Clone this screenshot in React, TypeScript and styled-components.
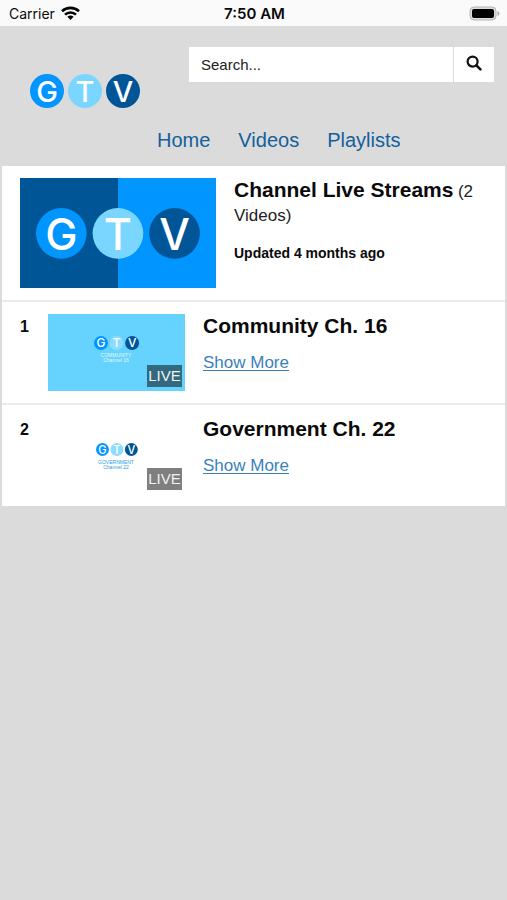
import React from "react";
import styled, { createGlobalStyle } from "styled-components";

const GlobalStyle = createGlobalStyle`
  * { box-sizing: border-box; }
  body {
    margin: 0;
    background: #dbdbdb;
    color: #0a0a0a;
    font-family: "Liberation Sans", Arial, sans-serif;
    font-size: 16px;
  }
`;

const StatusBar = styled.div`
  display: grid;
  grid-template-columns: 1fr auto 1fr;
  align-items: center;
  height: 26px;
  padding: 0 7px 0 9px;
  background: #fafafa;
  font-family: Inter, sans-serif;
  font-size: 14px;
`;

const Carrier = styled.div`
  display: flex;
  align-items: center;
  gap: 6px;
`;

const Clock = styled.time`
  font-size: 15px;
  font-weight: 600;
`;

const Battery = styled.svg`
  justify-self: end;
`;

const Header = styled.header`
  display: grid;
  grid-template-columns: 189px 1fr;
  padding: 21px 13px 0 0;
`;

const Brand = styled.a`
  padding: 27px 0 0 30px;
  svg { display: block; }
`;

const SearchForm = styled.form`
  display: flex;
  gap: 1px;
  height: 35px;
`;

const SearchInput = styled.input`
  flex: 1;
  min-width: 0;
  padding: 0 12px;
  border: 0;
  border-radius: 0;
  background: #fff;
  color: #222;
  font-family: inherit;
  font-size: 15px;
  &::placeholder { color: #222; opacity: 1; }
`;

const SearchButton = styled.button`
  display: flex;
  align-items: center;
  justify-content: center;
  width: 40px;
  padding: 0 0 3px;
  border: 0;
  background: #fff;
  color: #111;
`;

const Nav = styled.nav`
  grid-column: 1 / -1;
  display: flex;
  gap: 28px;
  padding: 19px 0 14px 157px;
`;

const NavLink = styled.a`
  color: #13609b;
  font-size: 20px;
  line-height: 24px;
  text-decoration: none;
`;

const List = styled.main`
  margin: 0 2px;
`;

const Summary = styled.section`
  display: flex;
  gap: 18px;
  padding: 12px 18px;
  border-bottom: 2px solid #ebebeb;
  background: #fff;
`;

const Cover = styled.svg`
  flex: none;
  display: block;
`;

const Details = styled.div`
  flex: 1;
  min-width: 0;
  line-height: 24px;
`;

const Title = styled.h2`
  display: inline;
  margin: 0;
  color: #0a0a0a;
  font-size: 21px;
  font-weight: 700;
  line-height: 24px;
`;

const Count = styled.span`
  color: #222;
  font-size: 17px;
  line-height: 24px;
`;

const Updated = styled.p`
  margin: 15px 0 0;
  font-size: 14px;
  font-weight: 700;
  line-height: 20px;
`;

const Channels = styled.ol`
  margin: 0;
  padding: 0;
  list-style: none;
`;

const Channel = styled.li`
  display: flex;
  padding: 12px 18px;
  border-bottom: 2px solid #ebebeb;
  background: #fff;
  &:last-child { border-bottom: 0; }
`;

const Position = styled.span`
  width: 28px;
  font-size: 16px;
  font-weight: 700;
  line-height: 26px;
`;

const Thumb = styled.div<{ $color: string }>`
  position: relative;
  flex: none;
  height: 77px;
  margin-right: 18px;
  background: ${(p) => p.$color};
  svg { display: block; }
`;

const LiveBadge = styled.span`
  position: absolute;
  right: 3px;
  bottom: 4px;
  width: 35px;
  background: rgba(0, 0, 0, 0.5);
  color: #f2f2f2;
  font-size: 15px;
  line-height: 22px;
  text-align: center;
`;

const ShowMore = styled.a`
  display: block;
  width: fit-content;
  margin-top: 12px;
  color: #3b7fbd;
  font-size: 17px;
  line-height: 22px;
  text-underline-offset: 2px;
`;

const LogoLetter = styled.text`
  fill: #fff;
  font-family: Inter, sans-serif;
  font-size: 29px;
  font-weight: 500;
  text-anchor: middle;
`;

const Caption = styled.text`
  font-family: "Liberation Sans", sans-serif;
  font-size: 5px;
  text-anchor: middle;
`;

const BLUE = "#0095ff";
const SKY = "#7bd6ff";
const NAVY = "#005596";

function LogoMark({ middle = SKY }: { middle?: string }) {
  return (
    <g>
      <circle cx="17" cy="17" r="17" fill={BLUE} />
      <circle cx="55" cy="17" r="17" fill={middle} />
      <circle cx="93" cy="17" r="17" fill={NAVY} />
      <LogoLetter x="17" y="28">G</LogoLetter>
      <LogoLetter x="55" y="28">T</LogoLetter>
      <LogoLetter x="93" y="28">V</LogoLetter>
    </g>
  );
}

interface ChannelData {
  title: string;
  name: string;
  caption: string;
  color: string;
  ink: string;
  middle: string;
  x: number;
  y: number;
  scale: number;
}

const channels: ChannelData[] = [
  { title: "Community Ch. 16", name: "COMMUNITY", caption: "Channel 16", color: "#66d3ff", ink: "#e5f8ff", middle: "#8bddff", x: 46, y: 22, scale: 0.41 },
  { title: "Government Ch. 22", name: "GOVERNMENT", caption: "Channel 22", color: "#ffffff", ink: "#2a9be0", middle: "#8edcff", x: 48, y: 26, scale: 0.38 },
];

export default function App() {
  return (
    <>
      <GlobalStyle />
      <StatusBar>
        <Carrier>
          <span>Carrier</span>
          <svg width="19" height="15" viewBox="0 0 19 15" fill="none" stroke="#050505" strokeWidth="2.6" aria-hidden="true">
            <path d="M1 5.2C5.8.7 13.2.7 18 5.2" />
            <path d="M4 8.6c3.1-2.9 7.9-2.9 11 0" />
            <path d="M9.5 14 6.4 10.8c1.8-1.6 4.4-1.6 6.2 0Z" fill="#050505" stroke="none" />
          </svg>
        </Carrier>
        <Clock>7:50 AM</Clock>
        <Battery width="31" height="15" viewBox="0 0 31 15" aria-label="Battery full">
          <rect x="1" y="1" width="26" height="13" rx="4" fill="#ddd" stroke="#b5b5b5" />
          <rect x="3" y="3" width="22" height="9" rx="2" fill="#000" />
          <path d="M28.5 5c2.5 1 2.5 4 0 5Z" fill="#aaa" />
        </Battery>
      </StatusBar>
      <Header>
        <Brand href="#home" aria-label="GTV home">
          <svg width="110" height="35" viewBox="0 0 110 35" overflow="visible" aria-hidden="true">
            <LogoMark />
          </svg>
        </Brand>
        <SearchForm role="search" onSubmit={(e: React.FormEvent) => e.preventDefault()}>
          <SearchInput type="text" aria-label="Search" placeholder="Search..." />
          <SearchButton type="submit" aria-label="Submit search">
            <svg width="16" height="16" viewBox="0 0 16 16" fill="none" stroke="currentColor" aria-hidden="true">
              <circle cx="6.6" cy="6.6" r="5" strokeWidth="2.2" />
              <path d="m10.4 10.4 4 4" strokeWidth="2.6" strokeLinecap="round" />
            </svg>
          </SearchButton>
        </SearchForm>
        <Nav aria-label="Main">
          <NavLink href="#home">Home</NavLink>
          <NavLink href="#videos">Videos</NavLink>
          <NavLink href="#playlists">Playlists</NavLink>
        </Nav>
      </Header>
      <List>
        <Summary>
          <Cover width="196" height="110" viewBox="0 0 196 110" aria-label="GTV">
            <rect width="196" height="110" fill={BLUE} />
            <rect width="98" height="110" fill={NAVY} />
            <g transform="translate(16 30) scale(1.49)">
              <LogoMark />
            </g>
          </Cover>
          <Details>
            <Title>Channel Live Streams</Title> <Count>(2 Videos)</Count>
            <Updated>Updated 4 months ago</Updated>
          </Details>
        </Summary>
        <Channels>
          {channels.map((c, i) => (
            <Channel key={c.title}>
              <Position>{i + 1}</Position>
              <Thumb $color={c.color}>
                <svg width="137" height="77" viewBox="0 0 137 77" aria-hidden="true">
                  <g transform={`translate(${c.x} ${c.y}) scale(${c.scale})`}>
                    <LogoMark middle={c.middle} />
                  </g>
                  <Caption x="68" y={c.y + 21} fill={c.ink}>{c.name}</Caption>
                  <Caption x="68" y={c.y + 26} fill={c.ink}>{c.caption}</Caption>
                </svg>
                <LiveBadge>LIVE</LiveBadge>
              </Thumb>
              <Details>
                <Title>{c.title}</Title>
                <ShowMore href={`#channel-${i + 1}`}>Show More</ShowMore>
              </Details>
            </Channel>
          ))}
        </Channels>
      </List>
    </>
  );
}
